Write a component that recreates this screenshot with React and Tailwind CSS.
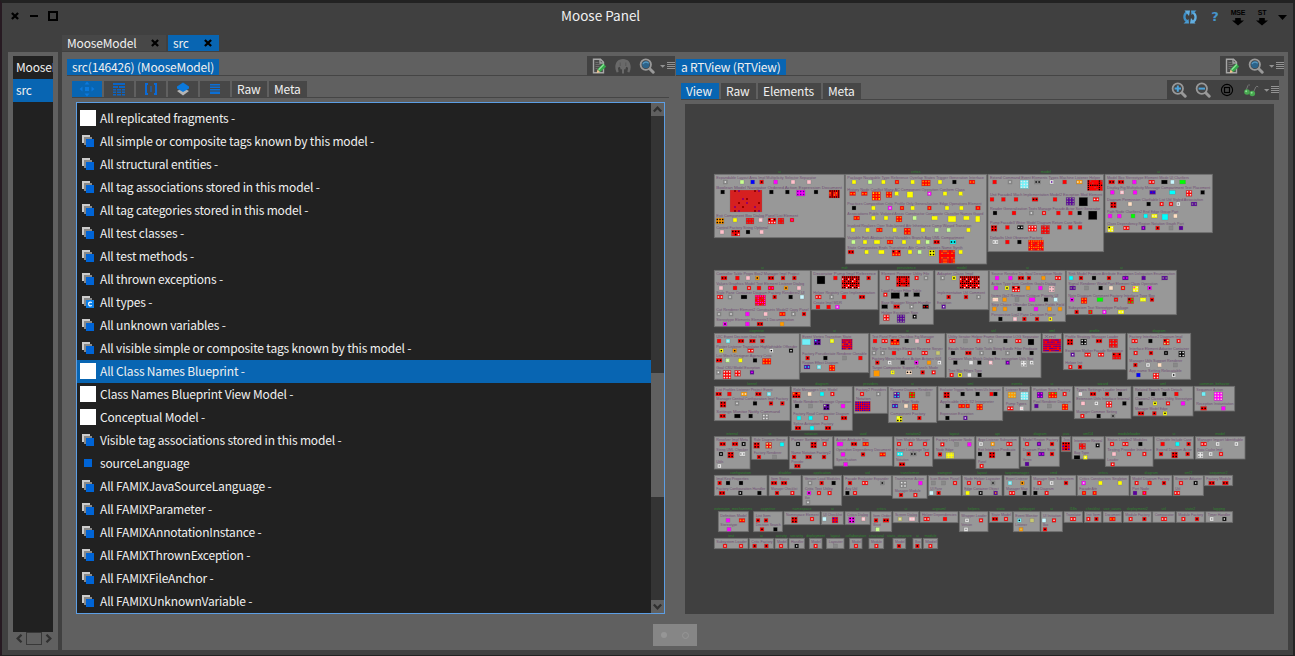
import React from "react";

const COLORS = {
  r: "#ff0000", k: "#000000", m: "#ff00ff", y: "#ffff00", p: "#ffc0cb", g: "#c8ff90",
  b: "#0000ff", c: "#00ffff", o: "#ff9800", v: "#5a009c", w: "#e8e8e8", s: "#888888",
  l: "#70f0f8", n: "#00ff00", e: "#ffe0c4", h: "#c8c870", q: "#c8f8ff", d: "#985050",
};

// Units are thirds of a pixel, relative to the group's origin.
// Package: [x, y, width, height, name, rows]; row: "labelY xEnd|labels|shapes"
// Shape: colour + centre x [,width [,height]] [/cell colours]
const GROUPS = [
  { ox: 710, oy: 165, packages: [
    [13, 28, 390, 190, "ui", [
      "38 318|Expandable Layout Area Impl Multiplicity Selector Separator|s46/w g96 b128 r155/k m197 p249 p297",
      "68 396|Boolean Model Navigator Ordered Action Expression Document|k38 r108,96,66/ddbdddkddd k184 k232 m272,26,18/v k318 r373,32,24/kdo",
      "152 264|Exit Component Box Dialog Panel List Element|o30,24,18/k y75 r120,24,18/d p152/w r186,24,18/kw r213,18,18/d r246/m",
      "188 174|Control Factory String Optional|p36 r77,26,18/kwd k114 p155",
    ]],
    [406, 28, 424, 269, "critics", [
      "38 822|Package Navigable Type Reference Overlap States Trigger Generation Interface|y432 g480 y520 r561/o y608 r648,26,18/o y690 k733 r786,18/o",
      "73 764|History Node Conflict Many AC Component Operation Conform Class|r428,18/o r463,18/o r499,26,26/yo r537,18,18/o y560 y600,18,18 m658/w y705 y752",
      "116 815|Practices Composition Critic Profile Only Generalization Edge Operations Element|k432 y490 m540/w r576/o y608 r658/o y711 y754 r804,14/o",
      "146 820|Associations Public Violated Assoc Constructor Composite Classifier Names Guard|r440,18/o y490 y528 r567,18,18/o g614 y674,18 y726,24,18 y769,18 y803,14,18",
      "182 784|Invoked Realizes Oper Subclassed Attr Inheritance Comp Wizard Transition|y429 y473 r508,18/o y554 r592,20,20/o y639 g680 g716 y775",
      "218 762|Variable Fork Abstract Initial Variables Branch Agg UML Compartment|g430 y465 y501,18 r540,18/o y582 y625 g653 r680,18/k c729,18/k",
      "248 758|State Composites Ends Transitions Attr Comb Classes Name Synth|r423,18/k y470 y514,18 r559,26,18/ko y600 g629 y666,18,18/k r711,48,40/roddo y752",
    ]],
    [13, 316, 288, 169, "ui", [
      "326 268|Controller Table Props Box2 Manager Impl Project|r42,18/k r82 p114 o142/k r183,18/k r219/k r253/k",
      "356 282|Values Graphics Model Text Element Listener Dialog|p33 r75 r117/w r147 r183,18/m o228/k p267",
      "383 284|Style Pane Container Diagram Factory Renderer2 UI|r30,18/w s60/w k102,18 r151,32,32/mrd r194/k k242 q276",
      "434 296|Cut Renderer Element2 Constraints Model2 Copy Panel|s27/w s63/w m112 p167 r217,18/o s250/w r282/k",
      "464 252|Stereotype Elements Elements1 Documentation|m45/k m112 r150,18/k o216",
    ]],
    [304, 316, 200, 118, "mdr", [
      "326 498|Decorator Pump Impl Reference|k333,24,24 r376 r422,54,38/kkdkrw r476/k",
      "383 495|Helper Registry Core Implementation|r325,18/w s365/w r402 r456,18/k",
      "413 396|Create Impl MDR|r324 r356 m382/w",
    ]],
    [508, 316, 162, 162, "persistence", [
      "326 658|Element Persister Utility File|r533/w r579,40,32/kdr r620/w s648/w",
      "376 634|Load Parser Filter Table|r526/w k556,26,18 k589 k620,18",
      "412 662|Base Manager Stream Handler|k524,18 r560,18/k s605/w k647,18/r",
      "442 624|Helper Exception Sign|r529,18,18/w v573,24,24/s k614/w",
    ]],
    [675, 316, 160, 118, "model", [
      "326 790|Adapter Class Impl|s698/w y732/k r779,60,38/kkdkrw",
      "383 825|Implementation Util Comment|r716/k r768/k s806/w",
      "412 724|Exception|v701/w",
    ]],
  ]},
  { ox: 975, oy: 165, packages: [
    [39, 28, 347, 232, "model", [
      "38 376|Extend Command Event Elements Types Machine Listener Helper|r59 s105/w l148,26,26/w s188,18/k w230/v r269 o313,18/w r360,46,32/krrdr",
      "90 382|Unit Facade4 Mach Implementation Model2 Exception Mod Element|r51 r85 r123 r180,18/k r240 v286,26,24/s k325,26,26 r363,18/w",
      "131 376|Reader Generalization Texts Manage Facade Actor Sort Generator|k60 r117 s169/w r207/w r250 r286 k314 k353,26,26",
      "174 322|Pump Facade3 Writer Model Diagram Return Case Node|r57,18,18/k r97 k136,18/w r172,26,18/w r211,26,26/ds r253 r286 r315",
      "218 202|Defaults Unit Observer Factory|w61,18/s r97 k133 r183,46,32/odr",
    ]],
    [390, 28, 322, 175, "ui", [
      "38 642|Model Box Stereotype Element Mode UI Clarifiers|r410,18/k r438,18/k m478 r530,18/w k568,18 q592 n623,18",
      "69 706|Display Fig Multiplicity Message Compartment Text Placement|m412 p441/w m480 v533,18/b c592,18 r642,18,18/w k683",
      "104 684|Diagram Permission Clarifiable List Util Styled Association|r415,18,18/k e465 k521 r560/w r588/w w610/s v657,18/s",
      "140 610|Path Node Clarifiers2 End Edge Group Part|m405 m433 n474 c512 y538,18/w c570,18,18 e601",
      "176 626|Class Dependency Region Notation Graph Port|y407,18,18/kw r454,18/w v505/m r548/k s588 v618",
    ]],
    [43, 316, 228, 154, "ui", [
      "326 262|Source Resolve Do Goal Description Node|m66 m106 r138,18/k r162/k o205 r249,18/w",
      "356 242|Action Type Item Confirm Goals Dialog|m63 y96/k r123,24,18/kw o159 m196 p230,18,18/s",
      "391 250|Items Go2 Remove Critique Priority UI|e61,18/p o89 s126 m171,18 k213 q242",
      "419 268|Step Choice Offender Decisions Fields Field|o58 o90 k133 m183 o224 o255",
      "449 242|Perspective List2 Pane Decision Poster|k76 p120/w r148/k r186/k y226/v",
    ]],
    [274, 316, 330, 133, "ui", [
      "326 600|Sink Model Feature Attribute Exception Delegation Enumeration|c288 r318/k k357 r402/k v451,18/m v506 v569,18/s",
      "356 548|Signal Renderer World Part Element Class Operation|v293,18/s s335 k377 e408 r444/g y482,18,18/mw m524/k",
      "391 540|Note Diagram Comment Factory Interface Type Box|m291/k r327,18,18/o n375,18 r423/s r467,18,18/kn y504,18/g r531/k",
      "428 460|Subsystem Text Stereotype Package|r305/k r346/n m388/w y438,18/w",
    ]],
  ]},
  { ox: 710, oy: 325, packages: [
    [13, 25, 255, 138, "cognitive", [
      "35 166|UIC Event Decision Goal Item|r27 l54/w r93,18/k r127,18/k r157/k",
      "64 262|Poster Listener Translator Highlightable Offender|y34/k o74/k r122,18/w w184/k k243/w",
      "93 186|List Mech Designer Agency Critic|r27,18/k g53/w y91 k135 r170,26,18/o",
      "129 150|Goal CSU Model Exception|s25/w r51,24,26/w r83,18,18/w v126/m",
    ]],
    [271, 25, 205, 118, "ui", [
      "35 424|Event Vertex Transition State|l289,26,18 v322,20,18/ck y366/g r411,32,32/vdb",
      "86 470|Factory Pseudostate Renderer Clonable|r293/k k346 s404 r451",
      "113 385|Region Effect Diagram|v291,18/c l327/w r366,18,18/o",
    ]],
    [480, 25, 225, 133, "ui", [
      "35 672|Text Panel Pane Checkbox Fig Manager|r495 r524,18/w r555,26,18/ko k590 p621 r654/w",
      "71 698|Mgr Tree Settings Element Reverse Server|s492/w s518/w r552 r599/w r644,18/w h684",
      "100 694|Factory Menu Interface Action Actions GUI|r502/k w539/s k578 m619/k o657,12 w688/s",
      "129 684|Target Composite Support Panels Mode|o500,18,18 y548/s e597,18/k r638/k r671/w",
    ]],
    [709, 25, 284, 133, "util", [
      "35 986|Utility Iterator Helper Frame Generator LOG Separator|r727,18/w s766 r805/w s842/w k886 r925,18/w k963,18,18",
      "71 982|Equals Tokenizer Table Tools String Bundle Filter Predicate|k729 r775,18/k s815/w k852 s893/w k927 k965",
      "100 970|Compare Main Match Dialog Enc encryption Utils Stat|k736 w783 k808 p842/w v893/m w941,18,18/s w965/s",
      "137 816|Tree Mgr Filters Type|r725/w y750/k w778 k809",
    ]],
    [13, 184, 227, 103, "kernel", [
      "194 188|List Profiles Listener Project Event|r26,18/k r58 o102,18/w r145,18/k l177/w",
      "222 234|Manager Central Configuration Impl Factory|r39,18,18/k s81/w k135 r183/k r217/k",
      "260 210|Settings Monitor Notify Command|r38,18/k k82,18 k122 s166,18,18/w",
    ]],
    [244, 184, 183, 132, "diagram", [
      "194 382|Role Messages Line Model|r259,24,18/ok e299 c336 r367/w",
      "230 424|Mode Renderer Message Operation|k261 s302 v349,18,18/gk m399",
      "266 418|Factory Road Comparator Diagram|c267 c302 r348/w r402,18/k",
      "296 370|Spline Activation Factory|r264,18/k c306 r354,18/k",
    ]],
    [432, 184, 100, 81, "providers", [
      "194 528|Factory2 Providers|r456/w s505/w",
      "222 482|Notation|r458,46,30/bvb",
    ]],
    [535, 184, 145, 109, "ui", [
      "194 668|Rename Diagram Renderer|v560,18,18/gc r606,18,18/n s654",
      "230 628|Object Root Node|v555,18/c e588 r615,18,18/o",
      "266 646|Component Factory|y568,18,18/gk r628/k",
    ]],
    [684, 184, 194, 103, "uml", [
      "194 872|Evaluator Triggers Notes Series UIs Invariant|r710,18,18/k k758 k803 r845 k856",
      "230 852|Applicable OCL II2 Interpreter|k713 r755,20/o r773/o r809,18,18/o",
      "266 790|Expression Exception|k712 v766/w",
    ]],
    [13, 335, 107, 97, "internal", [
      "344 114|Resolver Impl Meta|r38,18/k r75,18/k k101/w",
      "374 114|String UML Checker|k33/w r62,18,18/k w97,18/s",
      "410 40|Utils|w28/s",
    ]],
    [125, 335, 109, 68, "ui", [
      "345 226|Rule Diagram Group|r140,18,18/k r176,18,18/g c216",
      "383 214|Factory Renderer|r147/k s194",
    ]],
    [238, 335, 130, 97, "notation", [
      "344 356|Parser Settings Impl|k264/w r311,18,18/k r344/w",
      "383 362|Name Notation Factory2|r252/k r296,18/k r342/k",
      "410 280|Provider|r262,18/k",
    ]],
    [372, 335, 175, 88, "uuid", [
      "344 476|Action Attribute Box|m390,18 r432,18/k r467,18/o",
      "375 542|Operation Dependency Document|m399 r459/k r518,18/o",
      "405 440|Specification|m407",
    ]],
    [552, 335, 116, 89, "notation2", [
      "344 660|Item Module Manager|r567/w r602/w r645/w",
      "374 658|Event Language Text|c570,18/w s610,18/k r651/w",
      "405 596|Notation|r576,18/k",
    ]],
    [672, 335, 122, 67, "layout", [
      "345 786|Factory Layouter Node|r697/w s740 m778",
      "375 730|Node Edge|r690/k y720,24,18/h",
    ]],
  ]},
  { ox: 975, oy: 325, packages: [
    [202, 25, 58, 58, "xml", ["35 242|Xml|r231,54,38/vbvbr"]],
    [265, 25, 187, 109, "profile", [
      "35 430|Profile Strategy Manager Loader|r285,18,18/k k326,18,18/w r372,18/k r415,26,26/ds",
      "76 444|Exception Mother Facade Reference|v293/w r338,18/w r378,18/w r425,26,20/kd",
      "113 322|Helper Init|r286/w r315/k",
    ]],
    [457, 25, 190, 138, "diagram", [
      "35 622|Factory Interface2 Diagram Impl|r479,18/w k526 r574,18,18/kg r611/w",
      "71 642|Interface Element Adapter Container|r482/w r528/k k573/s k620,18,18/w",
      "107 622|Manager Utils Support Renderer|r481/k w519/s e554 s601",
      "137 620|App name Setting Relocatable|b490 r543,18,18/w w596/k",
    ]],
    [86, 184, 79, 74, "events", [
      "194 158|Listener Event|o111,24,18/h l148,24,24/w",
      "237 154|Pump Types|r106,18/w w140/p",
    ]],
    [169, 184, 124, 74, "ui", [
      "194 286|Partition State Factory|v195,18,18/m r233,26,18/no r269/w",
      "230 288|Pool Renderer Diagram|v184 s223 r270,18,18/o",
    ]],
    [298, 184, 170, 97, "wizard", [
      "194 456|Types Settings Loader Import|w316/p r354,18/k r396/k k435",
      "222 464|Extension Utils Interface Internal|p324 w364/s r402,18,18/w k448",
      "260 426|Manager Common Setting|r322/w k371 s414/k",
    ]],
    [474, 184, 180, 89, "uml", [
      "194 622|Related Search Trash Detach|k495 k534 k568 r604",
      "222 652|Classes2 Classes Utility Stereotype|k497 y540/k r579/w m624",
      "252 578|Manager Model Edge|r498,18/k r538/k y570/k",
    ]],
    [658, 184, 121, 74, "common_behavior", [
      "194 744|Sequence Action|l686 m730,26,26/p",
      "237 776|Reception Instantiation|r686,18/k m745",
    ]],
    [3, 335, 129, 96, "api", [
      "344 126|Argo Listener Subsystem|w18/s o53/w r103,18/w",
      "374 122|Exit Interface Predicate|k15 r51,18,18/k k100",
      "410 34|Panel|r20/w",
    ]],
    [137, 335, 116, 89, "diagram", [
      "344 250|Model Region Factory|r156/w v192/m r231/k",
      "374 242|Diagram Point State|r161/k v199,18/m r231/k",
      "404 170|Vertex|v156",
    ]],
    [259, 335, 28, 45, "java", ["344 284|Java|r273,24,26/kvb"]],
    [291, 335, 96, 67, "uml14", [
      "348 382|Interpreter Reveal|r322,20,18/ds k368/w",
      "384 342|Bag Type|k306,18 y331/w",
    ]],
    [391, 335, 143, 89, "moduleloader", [
      "344 516|Status Loader2 Modules|r411/w r451,18/w k496",
      "374 530|Testing Provider Interface|p417 r462/w r508/w",
      "405 430|Loader|r413/w",
    ]],
    [538, 335, 118, 67, "ui", [
      "344 650|Clonable Include Case|r563 c607 r641/k",
      "374 650|Extend Diagram Actor|r558/k r599,18,18/k r638/k",
    ]],
    [661, 335, 149, 67, "model", [
      "344 804|Manager Import Identifiable|r686,18/w w728/s w784/s",
      "374 742|Data Cache Impl|w676,18,18/s w707/s r738/w",
    ]],
  ]},
  { ox: 710, oy: 465, packages: [
    [13, 31, 158, 61, "configuration", [
      "41 116|Impl Key Properties|r29/k k54 k93",
      "71 166|Factory Configuration Handler|r36,18/k k91/w k148",
    ]],
    [177, 31, 96, 61, "disabler", [
      "41 238|Item Status|r192,18/k r222,18/k",
      "71 262|Manager Checklist|r201/k r247/w",
    ]],
    [278, 31, 117, 90, "application", [
      "41 390|Version Load Modules|s300/w r335/k k371",
      "71 368|Critic Text Utility|m297/k r327/w r359/w",
      "99 300|Main|s294/w",
    ]],
    [400, 31, 144, 61, "uid", [
      "41 536|Facade Evaluator Expander|r420/k r465,18/w s517/k",
      "71 442|Any Util|k412 r435/w",
    ]],
    [548, 31, 103, 69, "transformer", [
      "41 642|Transformer Action|s580,20,20/w m631",
      "77 632|Manager Module|r573/k r616/w",
    ]],
    [655, 31, 98, 61, "swingext", [
      "41 748|Icon Button Panel|s670 s701 r735/w",
      "71 696|UI Pane|q664/w r686/k",
    ]],
    [757, 31, 119, 61, "layout", [
      "41 870|Node Helper Layouter|r777/w r807/w s849/k",
      "71 866|Edge Container Object|y773 k812/w v857/o",
    ]],
    [25, 140, 90, 60, "extension_mechanisms", [
      "153 110|Definition Model|m54 r96,18/o",
      "180 82|Stereotype|m57",
    ]],
    [131, 140, 86, 60, "cognitive", [
      "153 182|List Item|r144/k r168/k",
      "180 212|Decision Search|r156/k k196",
    ]],
    [222, 140, 108, 39, "namespace", ["149 326|Namespace Element|r253,18,18/k r306/w"]],
    [334, 140, 66, 39, "ui", ["149 396|UI Checklist|q343 r375,18,18/bv"]],
    [405, 140, 75, 39, "ui", ["149 474|Critics Dialog|m425,18,18/k p460/w"]],
    [483, 140, 62, 60, "critics", [
      "153 542|Item Order|r498/k r528,18/k",
      "180 512|Wizard|g503",
    ]],
    [549, 140, 77, 33, "ui", ["149 622|Screen Dialog|h570/w p606,18/w"]],
    [630, 140, 114, 33, "argouml", ["149 740|Helper Dependencies|r650,18/w r705"]],
    [748, 140, 86, 60, "helpers", [
      "153 830|Wrapper Loader|w771/s r813/w",
      "180 786|Version|w768/s",
    ]],
    [13, 220, 101, 31, "test", ["230 110|Subsystem Loader|r45/w r93/w"]],
    [118, 220, 73, 31, "ui", ["230 188|Critic Factory|r134/k r169/k"]],
    [195, 220, 38, 31, "activity", ["230 230|Model|r213/w"]],
    [237, 220, 46, 31, "security", ["230 280|Handler|k260/w"]],
    [298, 220, 38, 31, "deployment", ["230 332|Model|r317/w"]],
    [350, 220, 52, 31, "layout", ["230 398|Layouter|s376"]],
    [419, 220, 37, 31, "collaboration", ["230 454|Model|r438/w"]],
    [477, 220, 44, 31, "structural", ["230 516|Module|r499/w"]],
    [549, 220, 38, 31, "static_structure", ["230 584|Model|r567/k"]],
    [609, 220, 26, 31, "ui", ["230 632|Box|r622/k"]],
    [640, 220, 43, 31, "module", ["230 680|Model|r661/w"]],
  ]},
  { ox: 975, oy: 465, packages: [
    [87, 31, 78, 61, "targetmanager", [
      "41 158|Event Listener|l105/w o142/k",
      "71 158|Manager Map|r111,18/w k149",
    ]],
    [169, 31, 134, 61, "cmd", [
      "41 296|Manager Item Subsystem|r193/w w230/s r273/k",
      "71 236|Exit Diagram|k181 r215/w",
    ]],
    [307, 31, 155, 61, "critics", [
      "41 456|Critics Constructors Singleton|m326/w y376 y435",
      "71 366|Facade Attr|r327/o r359/o",
    ]],
    [466, 31, 125, 61, "diagram", [
      "41 584|Model Diagram Factory|r485/w r524/o r567/k",
      "71 522|Port Node|v480 r508/m",
    ]],
    [595, 31, 90, 61, "xml2",[
      "41 680|Browser Adapter|r618/w k662/w",
      "71 616|Util|r606,18/w",
    ]],
    [688, 31, 85, 31, "sequence2", ["41 768|Factory Module|r710,18/k r751,18/k"]],
    [43, 140, 69, 32, "static", ["149 108|State Model|r60,18/k r93/w"]],
    [115, 140, 80, 60, "tasktarget", [
      "153 188|Event Monitor|l133/k h171",
      "180 156|Listener|o138/h",
    ]],
    [198, 140, 64, 60, "ui", [
      "153 258|UI Initiation|q207 r237/w",
      "180 220|Box|r210/k",
    ]],
    [267, 140, 56, 32, "I18n", ["149 318|Translator|r294,18/w"]],
    [328, 140, 51, 32, "checklist", ["149 376|Init Item|r340/w r364/k"]],
    [384, 140, 56, 32, "use_cases", ["149 436|Document|r412,18/o"]],
    [445, 140, 84, 32, "deployment2", ["149 524|Module Factory|r467/w r508/k"]],
    [533, 140, 67, 32, "util", ["149 596|Comparator|r567,18/w"]],
    [604, 140, 84, 32, "state2", ["149 684|Module Factory|r625/w r666/k"]],
    [692, 140, 81, 32, "logging", ["149 766|Timer Handler|w710/s k748/w"]],
  ]},
];

function Shape({ spec, top }) {
  const [body, cells] = spec.split("/");
  const [cx, w = 12, h = 12] = body.slice(1).split(",").map(Number);
  const x = cx - w / 2;
  const inner = [];
  if (cells) {
    const pitch = w >= 30 ? 6 : 7.5;
    const size = w >= 30 ? 3.8 : 4.4;
    const cols = Math.max(1, Math.floor(w / pitch));
    const rows = Math.max(1, Math.floor(h / pitch));
    const sx = w / cols;
    const sy = h / rows;
    for (let j = 0; j < rows; j++) {
      for (let i = 0; i < cols; i++) {
        const c = cells[(i * 3 + j * 5 + i * j) % cells.length];
        inner.push(
          <rect key={`${i}-${j}`} x={x + i * sx + (sx - size) / 2} y={top + j * sy + (sy - size) / 2}
            width={size} height={size} fill={COLORS[c]} />
        );
      }
    }
  }
  return (
    <g>
      <rect x={x} y={top} width={w} height={h} fill={COLORS[body[0]]} stroke="#777" strokeWidth="1" />
      {inner}
    </g>
  );
}

function Package({ data }) {
  const [x, y, w, h, name, rows] = data;
  return (
    <g>
      <text x={x + w / 2} y={y - 4} textAnchor="middle" fontSize="11" fill="#2f852f">{name}</text>
      <rect x={x} y={y} width={w} height={h} fill="#989898" stroke="#6e6e6e" strokeWidth="2.5" />
      {rows.map((row, i) => {
        const [pos, label, shapes] = row.split("|");
        const [ly, xEnd] = pos.split(" ").map(Number);
        return (
          <g key={i}>
            <text x={x + 6} y={ly + 4} fontSize="11.5" textLength={xEnd - x - 6}
              lengthAdjust="spacingAndGlyphs" fill="#704f74">{label}</text>
            {shapes.split(" ").map((s, k) => <Shape key={k} spec={s} top={ly + 7} />)}
          </g>
        );
      })}
    </g>
  );
}

function SystemMap() {
  return (
    <svg className="block h-[510px] w-[589px] font-['Liberation_Sans',sans-serif] tracking-normal" viewBox="685 104 589 510">
      {GROUPS.map((g, i) => (
        <g key={i} transform={`translate(${g.ox} ${g.oy}) scale(0.33333)`}>
          {g.packages.map((p, k) => <Package key={k} data={p} />)}
        </g>
      ))}
    </svg>
  );
}

/* ---------- icons ---------- */
const Cross = () => (
  <svg className="size-2 shrink-0" viewBox="0 0 8 8"><path d="M.9 1l6.200 6M7.100 1L.9 7" stroke="#000" strokeWidth="2.300" /></svg>
);
const EditIcon = () => (
  <svg className="size-4 shrink-0" viewBox="0 0 16 16">
    <path d="M2.500 1.200h7l3 3V14.800h-10z" fill="#4b4b4b" stroke="#a6a6a6" strokeWidth="1.4" />
    <path d="M9 1v4h4" fill="none" stroke="#a6a6a6" strokeWidth="1.3" />
    <path d="M4.5 4.5h3M4.5 6.5h5M4.5 8.5h4M4.5 10.5h2" stroke="#777" strokeWidth=".8" />
    <path d="M5.6 14.9l1-3.6 2.600 2.600z" fill="#f2c58c" />
    <path d="M6.500 11.300L12 5.600l3.200 2.900-5.900 5.600z" fill="#35a94a" />
    <path d="M7.600 11.700l5.300-5.300" stroke="#8ee79a" strokeWidth="1.3" />
  </svg>
);
const MooseIcon = () => (
  <svg className="size-4 shrink-0" viewBox="0 0 16 16">
    <path d="M1.600 14.500C-1.500 8 1 1 8 1s9.500 7 6.400 13.500l-2-.6.700-4.200-2-.9-.8 2.700-1.300-.3V15.500H7v-4.300l-1.300.3-.8-2.700-2 .9.700 4.200z" fill="#696969" />
    <path d="M5.200 8V4.500M10.800 8V4.500" stroke="#505050" strokeWidth=".7" />
  </svg>
);
const Lens = ({ sign }) => (
  <svg className="size-4 shrink-0" viewBox="0 0 16 16">
    <path d="M10.200 10.200l4 4" stroke="#999" strokeWidth="3" strokeLinecap="round" />
    <circle cx="6.800" cy="6.600" r="5.200" fill={sign ? "#454545" : "#454545"} stroke="#999" strokeWidth="1.800" />
    {!sign && <circle cx="6.800" cy="6.600" r="3.700" fill="#2c638a" />}
    {!sign && <path d="M4 6a3.200 3 0 0 1 5.600-.7" fill="none" stroke="#5798bf" strokeWidth="1.2" />}
    {sign && <path d={sign === "+" ? "M3.600 6.600H10M6.800 3.400v6.400" : "M3.600 6.600H10"} stroke="#4ca3da" strokeWidth="2" />}
  </svg>
);
const MenuMark = () => (
  <svg className="h-[10px] w-[15px] shrink-0" viewBox="0 0 15 10">
    <path d="M0 4h5.400L2.700 6.700z" fill="#929292" />
    <path d="M7 1.500h8M7 3.500h8M7 5.500h8M7 7.500h8" stroke="#929292" strokeWidth="1" />
  </svg>
);
const FitIcon = () => (
  <svg className="size-4 shrink-0" viewBox="0 0 16 16" fill="none" stroke="#000">
    <circle cx="8" cy="8" r="5.600" strokeWidth="1.100" /><rect x="5.500" y="5.500" width="5" height="5" strokeWidth="1.200" />
  </svg>
);
const GlassesIcon = () => (
  <svg className="size-4 shrink-0" viewBox="0 0 16 16">
    <path d="M3 8.500l2-5q.8-1.700 1.800-.2M10.500 10l2.300-5q1-1.700 2.500 0" stroke="#777" fill="none" />
    <circle cx="4" cy="10" r="2.800" fill="#48a850" /><circle cx="9.300" cy="11.500" r="2.800" fill="#48a850" />
    <circle cx="3.200" cy="9.300" r="1" fill="#8be092" /><circle cx="8.600" cy="10.700" r="1" fill="#8be092" />
  </svg>
);
const RefreshIcon = () => (
  <svg className="size-4 shrink-0" viewBox="0 0 16 16">
    <path d="M5.600 12.500C1.500 11 1.500 5.500 4.800 3.200" fill="none" stroke="#3f8fc6" strokeWidth="2.300" />
    <path d="M2.500 1.500H8L7 7z" fill="#62aee0" />
    <path d="M10.400 3.500C14.500 5 14.500 10.500 11.200 12.800" fill="none" stroke="#62aee0" strokeWidth="2.300" />
    <path d="M13.500 14.500H8L9 9z" fill="#62aee0" />
    <path d="M1.500 14.500H7L6.500 10zM14.500 1.500H9l.5 4.500z" fill="#4a9bd2" />
  </svg>
);
const Download = ({ children }) => (
  <svg className="h-[18px] w-4 shrink-0 overflow-visible font-['Liberation_Sans',sans-serif]" viewBox="0 0 16 18">
    <text x="8" y="6.400" textAnchor="middle" fontSize="7" fontWeight="bold">{children}</text>
    <path d="M5.200 9h5.600v2.500H14L8 16.500 2 11.500h3.200z" />
  </svg>
);
const StackIcon = ({ letter }) => (
  <svg className="ml-[5px] mr-[6px] size-3 shrink-0" viewBox="0 0 12 12">
    <path d="M0 0h8v8H0z" fill="#ccc" /><path d="M2 2h8v8H2z" fill="#898989" /><path d="M4 4h8v8H4z" fill={letter ? "#0a7fe8" : "#0064d6"} />
    {letter && <path d="M9.900 6.500q-3.300-1-3.300 1.500t3.300 1.500" fill="none" stroke="#fff" strokeWidth="1.200" />}
  </svg>
);
const Chevron = ({ d }) => (
  <svg className="size-[9px]" viewBox="0 0 9 9"><path d={d} fill="none" stroke="#303030" strokeWidth="2.300" /></svg>
);
const UP = "M.8 6.500L4.500 2.700 8.200 6.500";
const DOWN = "M.8 2.500L4.500 6.300 8.200 2.500";
const LEFT = "M6.500 .8L2.700 4.500 6.500 8.200";
const RIGHT = "M2.500 .8L6.300 4.500 2.500 8.200";

const VIEW_ICONS = [
  <svg className="h-4 w-4" viewBox="0 0 16 16" fill="#0b79dc"><path d="M8 .5l2.500 3h-5zM8 15.500l2.500-3h-5zM.5 8l3-2.500v5zM15.500 8l-3-2.500v5zM6 6h4v4H6z" /></svg>,
  <svg className="h-4 w-4" viewBox="0 0 16 16" fill="#0b64c4"><path d="M2 2h12v2H2zM2 5h5v2H2zM8 5h6v2H8zM2 8h3v1.500H2zM6 8h4v1.500H6zM11 8h3v1.500h-3zM2 10.500h3V12H2zM6 10.500h4V12H6zM11 10.500h3V12h-3zM2 13h3v1.500H2zM6 13h4v1.500H6zM11 13h3v1.500h-3z" /></svg>,
  <svg className="h-4 w-4" viewBox="0 0 16 16" fill="none" stroke="#0b6ad6" strokeWidth="2"><path d="M5 3H3v10h2M11 3h2v10h-2" /><path d="M8 5v6" strokeWidth="1" /></svg>,
  <svg className="h-4 w-4" viewBox="0 0 16 16"><path d="M2 10l6-3 6 3-6 4.500z" fill="#b4b4b4" /><path d="M2 5.500l6-4 6 4v2L8 11 2 7.500z" fill="#0b79dc" /></svg>,
  <svg className="h-4 w-4" viewBox="0 0 16 16" fill="#0b6fd6"><path d="M3 3h10v1.500H3zM3 5.500h10V7H3zM3 8h10v1.500H3zM3 10.500h10V13H3z" /></svg>,
];

const ROWS = [
  ["box", "All replicated fragments -"],
  ["stack", "All simple or composite tags known by this model -"],
  ["stack", "All structural entities -"],
  ["stack", "All tag associations stored in this model -"],
  ["stack", "All tag categories stored in this model -"],
  ["stack", "All test classes -"],
  ["stack", "All test methods -"],
  ["stack", "All thrown exceptions -"],
  ["letter", "All types -"],
  ["stack", "All unknown variables -"],
  ["stack", "All visible simple or composite tags known by this model -"],
  ["box", "All Class Names Blueprint -"],
  ["box", "Class Names Blueprint View Model -"],
  ["box", "Conceptual Model -"],
  ["stack", "Visible tag associations stored in this model -"],
  ["square", "sourceLanguage"],
  ["stack", "All FAMIXJavaSourceLanguage -"],
  ["stack", "All FAMIXParameter -"],
  ["stack", "All FAMIXAnnotationInstance -"],
  ["stack", "All FAMIXThrownException -"],
  ["stack", "All FAMIXFileAnchor -"],
  ["stack", "All FAMIXUnknownVariable -"],
];

function RowIcon({ kind }) {
  if (kind === "box") return <span className="ml-[3px] mr-1 size-4 shrink-0 bg-white" />;
  if (kind === "square") return <span className="ml-[7px] mr-2 size-2 shrink-0 bg-[#0064d6]" />;
  return <StackIcon letter={kind === "letter"} />;
}

function Tab({ active, className, children }) {
  return (
    <div className={`flex h-4 shrink-0 items-center whitespace-nowrap ${active ? "bg-[#0865b2]" : "bg-[#474747]"} ${className}`}>
      {children}
    </div>
  );
}

function ListPane() {
  return (
    <section className="flex w-[613px] shrink-0 flex-col pl-[5px]">
      <div className="flex h-5">
        <div className="flex w-[520px] items-end border-b border-[#454545]">
          <Tab active className="w-[152px] pl-[5px]">src(146426) (MooseModel)</Tab>
        </div>
        <div className="flex w-[88px] items-center bg-[#424242] pl-1">
          <EditIcon /><span className="w-2" /><MooseIcon /><span className="w-2" /><Lens /><span className="w-[5px]" /><MenuMark />
        </div>
      </div>
      <div className="ml-[5px] mt-[5px] flex h-[17px] w-[597px] gap-0.5 border-b border-[#454545]">
        {VIEW_ICONS.map((icon, i) => <Tab key={i} active={i === 0} className="w-[30px] justify-center">{icon}</Tab>)}
        <Tab className="w-[35px] pl-[5px]">Raw</Tab>
        <Tab className="w-[38px] pl-[5px]">Meta</Tab>
      </div>
      <div className="ml-[9px] mt-1 flex h-[512px] w-[589px] border border-[#5c9ee4] bg-[#212121]">
        <ul className="w-[574px] pt-1">
          {ROWS.map(([kind, text]) => (
            <li key={text} className={`flex h-[23px] items-center whitespace-nowrap pb-px ${text === "All Class Names Blueprint -" ? "bg-[#0865b2]" : ""}`}>
              <RowIcon kind={kind} />{text}
            </li>
          ))}
        </ul>
        <div className="flex w-[13px] flex-col bg-[#343434]">
          <div className="flex h-[13px] items-center justify-center bg-[#606060]"><Chevron d={UP} /></div>
          <div className="mt-[257px] h-[124px] bg-[#606060]" />
          <div className="mt-auto flex h-[13px] items-center justify-center bg-[#606060]"><Chevron d={DOWN} /></div>
        </div>
      </div>
    </section>
  );
}

function ViewPane() {
  return (
    <section className="ml-px flex w-[608px] shrink-0 flex-col">
      <div className="flex h-5">
        <div className="flex w-[544px] items-end border-b border-[#454545]">
          <Tab active className="w-[110px] pl-[5px]">a RTView (RTView)</Tab>
        </div>
        <div className="flex w-16 items-center bg-[#424242] pl-1">
          <EditIcon /><span className="w-2" /><Lens /><span className="w-[5px]" /><MenuMark />
        </div>
      </div>
      <div className="ml-[5px] mt-1 flex h-5">
        <div className="flex w-[486px] items-end gap-0.5 border-b border-[#454545]">
          <Tab active className="w-[38px] pl-[5px]">View</Tab>
          <Tab className="w-[35px] pl-[5px]">Raw</Tab>
          <Tab className="w-[63px] pl-[5px]">Elements</Tab>
          <Tab className="w-[38px] pl-[5px]">Meta</Tab>
        </div>
        <div className="flex w-28 items-center gap-2 bg-[#424242] pl-1">
          <Lens sign="+" /><Lens sign="-" /><FitIcon /><GlassesIcon /><span className="-ml-[3px]"><MenuMark /></span>
        </div>
      </div>
      <div className="ml-[9px] mt-1 h-[510px] w-[589px] bg-[#404040]"><SystemMap /></div>
    </section>
  );
}

export default function App() {
  return (
    <div className="flex h-[656px] w-[1295px] flex-col overflow-hidden border-b border-l-2 border-r-2 border-t-[3px] border-b-[#222] border-l-[#271a22] border-r-[#242424] border-t-[#222] bg-[#404040] font-['Noto_Sans_CJK_SC',sans-serif] text-[12px] leading-4 tracking-[-0.17px] text-[#f0f0f0]">
      <header className="flex h-8 shrink-0 items-start">
        <div className="flex w-[559px] shrink-0 items-center gap-[10px] pl-[9px] pt-2">
          <Cross /><span className="ml-px h-0.5 w-2 bg-black" /><span className="size-[10px] border-2 border-black" />
        </div>
        <h1 className="w-[621px] shrink-0 pt-1 text-[13.5px] tracking-normal">Moose Panel</h1>
        <div className="flex shrink-0 items-start pt-1.5">
          <RefreshIcon />
          <span className="ml-[9px] w-4 text-center font-['DejaVu_Sans',sans-serif] text-[13px] font-bold text-[#4695cc]">?</span>
          <span className="w-[7px]" /><Download>MSE</Download><span className="w-2" /><Download>ST</Download>
          <svg className="ml-2 mt-[6px] h-[5px] w-[9px]" viewBox="0 0 9 5"><path d="M0 0h9L4.500 5z" /></svg>
        </div>
      </header>
      <nav className="flex h-[17px] shrink-0 gap-0.5 pl-[60px]">
        <Tab className="w-[104px] justify-between pl-[5px] pr-[7px]">MooseModel<Cross /></Tab>
        <Tab active className="w-[51px] justify-between pl-[5px] pr-[7px]">src<Cross /></Tab>
      </nav>
      <main className="flex h-[598px] shrink-0 gap-1 pl-1.5">
        <aside className="w-[50px] shrink-0 bg-[#606060] px-[5px] pt-1">
          <div className="h-[576px] overflow-hidden whitespace-nowrap bg-[#212121]">
            <div className="flex h-[23px] items-center pb-px pl-[3px]">MooseModel</div>
            <div className="flex h-[23px] items-center bg-[#0865b2] pb-px pl-[3px]">src</div>
          </div>
          <div className="flex h-[13px] items-center justify-between pl-[2px]">
            <Chevron d={LEFT} /><span className="h-[13px] w-4 border border-[#383838]" /><Chevron d={RIGHT} />
          </div>
        </aside>
        <div className="flex w-[1226px] shrink-0 flex-col bg-[#606060] pt-1">
          <div className="flex">
            <ListPane />
            <ViewPane />
          </div>
          <div className="ml-[591px] mt-[10px] flex h-[22px] w-11 items-center justify-around bg-[#868686]">
            <span className="size-1.5 rounded-full bg-[#969696]" />
            <span className="size-[7px] rounded-full border border-[#969696]" />
          </div>
        </div>
      </main>
    </div>
  );
}
